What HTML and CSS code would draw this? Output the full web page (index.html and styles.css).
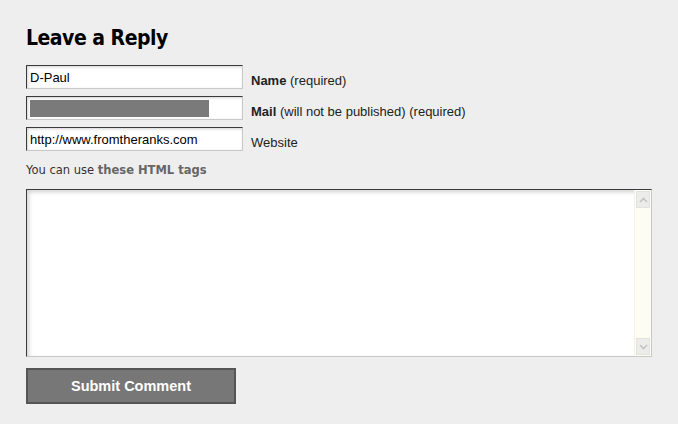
FILE: index.html
```html
<!DOCTYPE html>
<html lang="en">
<head>
    <meta charset="UTF-8">
    <title>Leave a Reply</title>
    <link rel="stylesheet" href="styles.css">
</head>
<body>
    <div class="respond">
        <h3>Leave a Reply</h3>

        <form class="comment-form">
            <div class="field">
                <input type="text" class="text-input" value="D-Paul">
                <label><strong>Name</strong> (required)</label>
            </div>
            <div class="field">
                <div class="text-input masked"><span class="redact"></span></div>
                <label><strong>Mail</strong> (will not be published) (required)</label>
            </div>
            <div class="field">
                <input type="text" class="text-input" value="http://www.fromtheranks.com">
                <label>Website</label>
            </div>

            <p class="tags">You can use <strong>these HTML tags</strong></p>

            <div class="comment-box">
                <textarea></textarea>
                <div class="scrollbar">
                    <span class="arrow up"><svg width="9" height="6" viewBox="0 0 9 6"><path d="M1 5 L4.5 1.5 L8 5" fill="none" stroke="#c4c4c4" stroke-width="1.6"/></svg></span>
                    <span class="arrow down"><svg width="9" height="6" viewBox="0 0 9 6"><path d="M1 1 L4.5 4.5 L8 1" fill="none" stroke="#c4c4c4" stroke-width="1.6"/></svg></span>
                </div>
            </div>

            <button type="button" class="submit">Submit Comment</button>
        </form>
    </div>
</body>
</html>
```

FILE: styles.css
```css
body {
    margin: 0;
    background-color: #eeeeee;
    font-family: 'Liberation Sans', Arial, sans-serif;
    color: #222;
}

.respond {
    padding: 26px 26px 20px 26px;
}

h3 {
    font-family: 'DejaVu Sans Condensed', 'DejaVu Sans', Verdana, sans-serif;
    font-size: 21px;
    line-height: 24px;
    font-weight: bold;
    letter-spacing: -0.5px;
    color: #000;
    margin: 0 0 15px 0;
}

.field {
    display: flex;
    align-items: flex-start;
    height: 24px;
    margin-bottom: 7px;
}

.text-input {
    box-sizing: border-box;
    width: 217px;
    height: 24px;
    margin: 0;
    padding: 2px 3px;
    font-family: 'Liberation Sans', Arial, sans-serif;
    font-size: 13px;
    color: #000;
    background: #fff;
    border: 1px solid #c8c8c8;
    border-top-color: #3a3a3a;
    border-left-color: #3a3a3a;
    box-shadow: inset 1px 1px 3px rgba(0, 0, 0, 0.18);
    outline: none;
}

.masked {
    display: flex;
    align-items: center;
    padding: 2px 3px;
}

.redact {
    display: block;
    width: 179px;
    height: 17px;
    background: #7a7a7a;
}

.field label {
    margin-left: 8px;
    margin-top: 8px;
    font-size: 13px;
    line-height: 15px;
}

.tags {
    font-family: 'DejaVu Sans', Verdana, sans-serif;
    font-size: 11.5px;
    line-height: 14px;
    color: #333;
    margin: 12px 0 12px 0;
}

.tags strong {
    color: #666;
}

.comment-box {
    display: flex;
    width: 626px;
    height: 168px;
    box-sizing: border-box;
    background: #fff;
    border: 1px solid #c8c8c8;
    border-top-color: #3a3a3a;
    border-left-color: #3a3a3a;
    box-shadow: inset 2px 2px 4px rgba(0, 0, 0, 0.18);
}

.comment-box textarea {
    flex: 1;
    border: none;
    background: transparent;
    resize: none;
    outline: none;
    margin: 0;
}

.scrollbar {
    width: 16px;
    background: #fdfdf3;
    border-left: 1px solid #f2f2e8;
    display: flex;
    flex-direction: column;
    justify-content: space-between;
}

.arrow {
    display: flex;
    align-items: center;
    justify-content: center;
    height: 15px;
    margin: 1px;
    background: #ececea;
    border: 1px solid #e2e2de;
}

.submit {
    display: block;
    margin-top: 11px;
    width: 210px;
    height: 36px;
    background: #777;
    border: 2px solid #555;
    color: #fff;
    font-family: 'Liberation Sans', Arial, sans-serif;
    font-size: 14.5px;
    font-weight: bold;
    cursor: pointer;
}
```
